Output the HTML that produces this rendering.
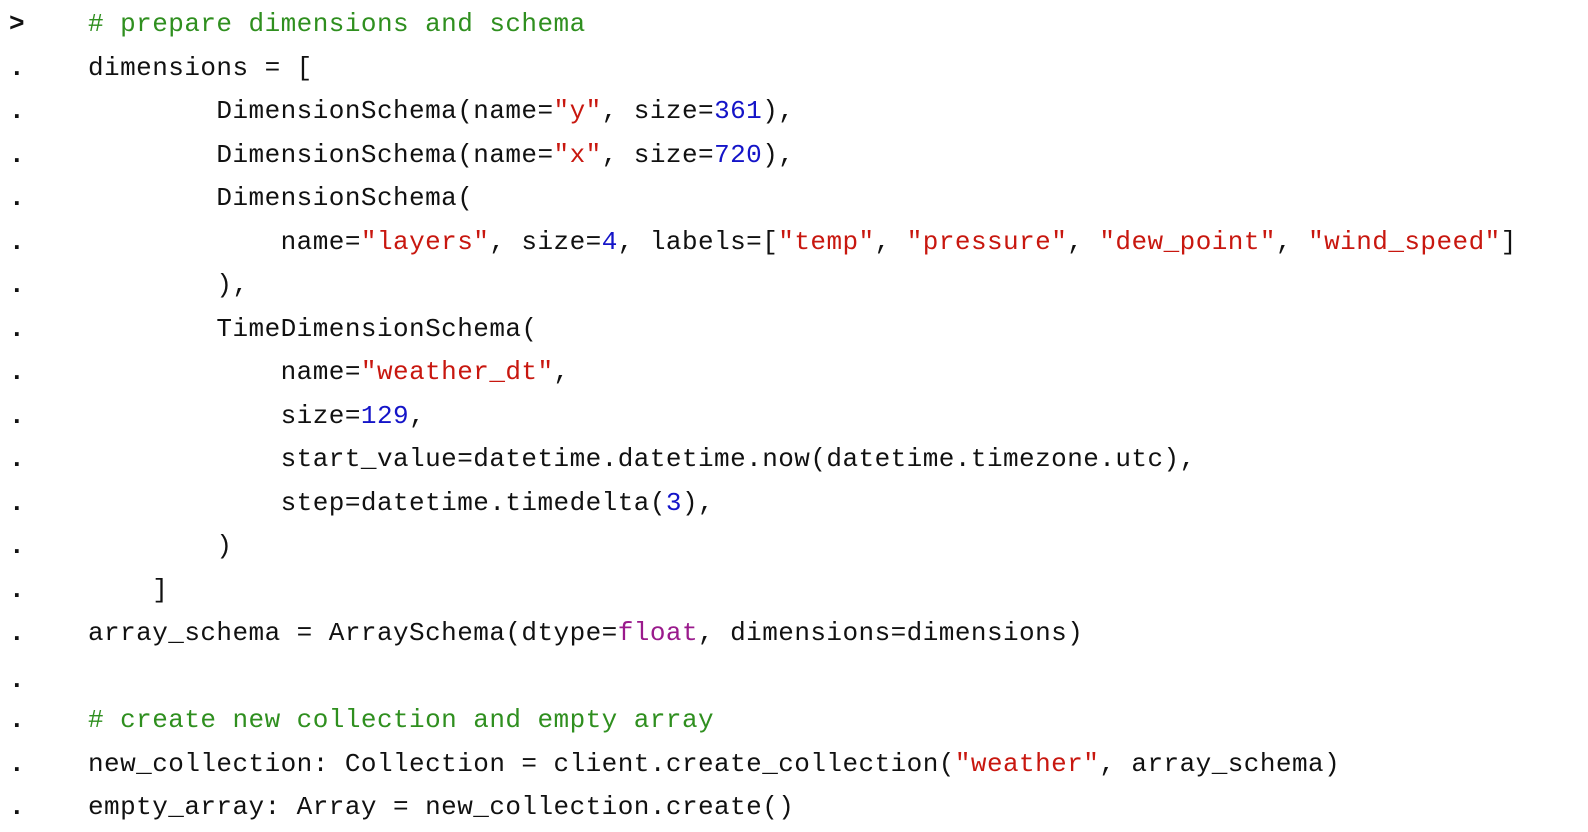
<!DOCTYPE html>
<html><head><meta charset="utf-8"><style>
html,body{margin:0;padding:0;background:#fff;width:1588px;height:832px;overflow:hidden}
.l{position:absolute;left:0;height:30px;line-height:30px;font-family:"Liberation Mono",monospace;font-size:26px;letter-spacing:0.45px;color:#111;white-space:pre}
.m{position:absolute;left:9px;font-weight:bold}
.c{position:absolute;left:88px}
.g{color:#2f8f1f}.s{color:#c8170f}.n{color:#1414c8}.p{color:#9a1a8c}
</style></head><body>
<div class="l" style="top:9px"><span class="m">&gt;</span><span class="c"><span class="g"># prepare dimensions and schema</span></span></div>
<div class="l" style="top:53px"><span class="m">.</span><span class="c">dimensions = [</span></div>
<div class="l" style="top:96px"><span class="m">.</span><span class="c">        DimensionSchema(name=<span class="s">"y"</span>, size=<span class="n">361</span>),</span></div>
<div class="l" style="top:140px"><span class="m">.</span><span class="c">        DimensionSchema(name=<span class="s">"x"</span>, size=<span class="n">720</span>),</span></div>
<div class="l" style="top:183px"><span class="m">.</span><span class="c">        DimensionSchema(</span></div>
<div class="l" style="top:227px"><span class="m">.</span><span class="c">            name=<span class="s">"layers"</span>, size=<span class="n">4</span>, labels=[<span class="s">"temp"</span>, <span class="s">"pressure"</span>, <span class="s">"dew_point"</span>, <span class="s">"wind_speed"</span>]</span></div>
<div class="l" style="top:270px"><span class="m">.</span><span class="c">        ),</span></div>
<div class="l" style="top:314px"><span class="m">.</span><span class="c">        TimeDimensionSchema(</span></div>
<div class="l" style="top:357px"><span class="m">.</span><span class="c">            name=<span class="s">"weather_dt"</span>,</span></div>
<div class="l" style="top:401px"><span class="m">.</span><span class="c">            size=<span class="n">129</span>,</span></div>
<div class="l" style="top:444px"><span class="m">.</span><span class="c">            start_value=datetime.datetime.now(datetime.timezone.utc),</span></div>
<div class="l" style="top:488px"><span class="m">.</span><span class="c">            step=datetime.timedelta(<span class="n">3</span>),</span></div>
<div class="l" style="top:531px"><span class="m">.</span><span class="c">        )</span></div>
<div class="l" style="top:575px"><span class="m">.</span><span class="c">    ]</span></div>
<div class="l" style="top:618px"><span class="m">.</span><span class="c">array_schema = ArraySchema(dtype=<span class="p">float</span>, dimensions=dimensions)</span></div>
<div class="l" style="top:665px"><span class="m">.</span></div>
<div class="l" style="top:705px"><span class="m">.</span><span class="c"><span class="g"># create new collection and empty array</span></span></div>
<div class="l" style="top:749px"><span class="m">.</span><span class="c">new_collection: Collection = client.create_collection(<span class="s">"weather"</span>, array_schema)</span></div>
<div class="l" style="top:792px"><span class="m">.</span><span class="c">empty_array: Array = new_collection.create()</span></div>
</body></html>
